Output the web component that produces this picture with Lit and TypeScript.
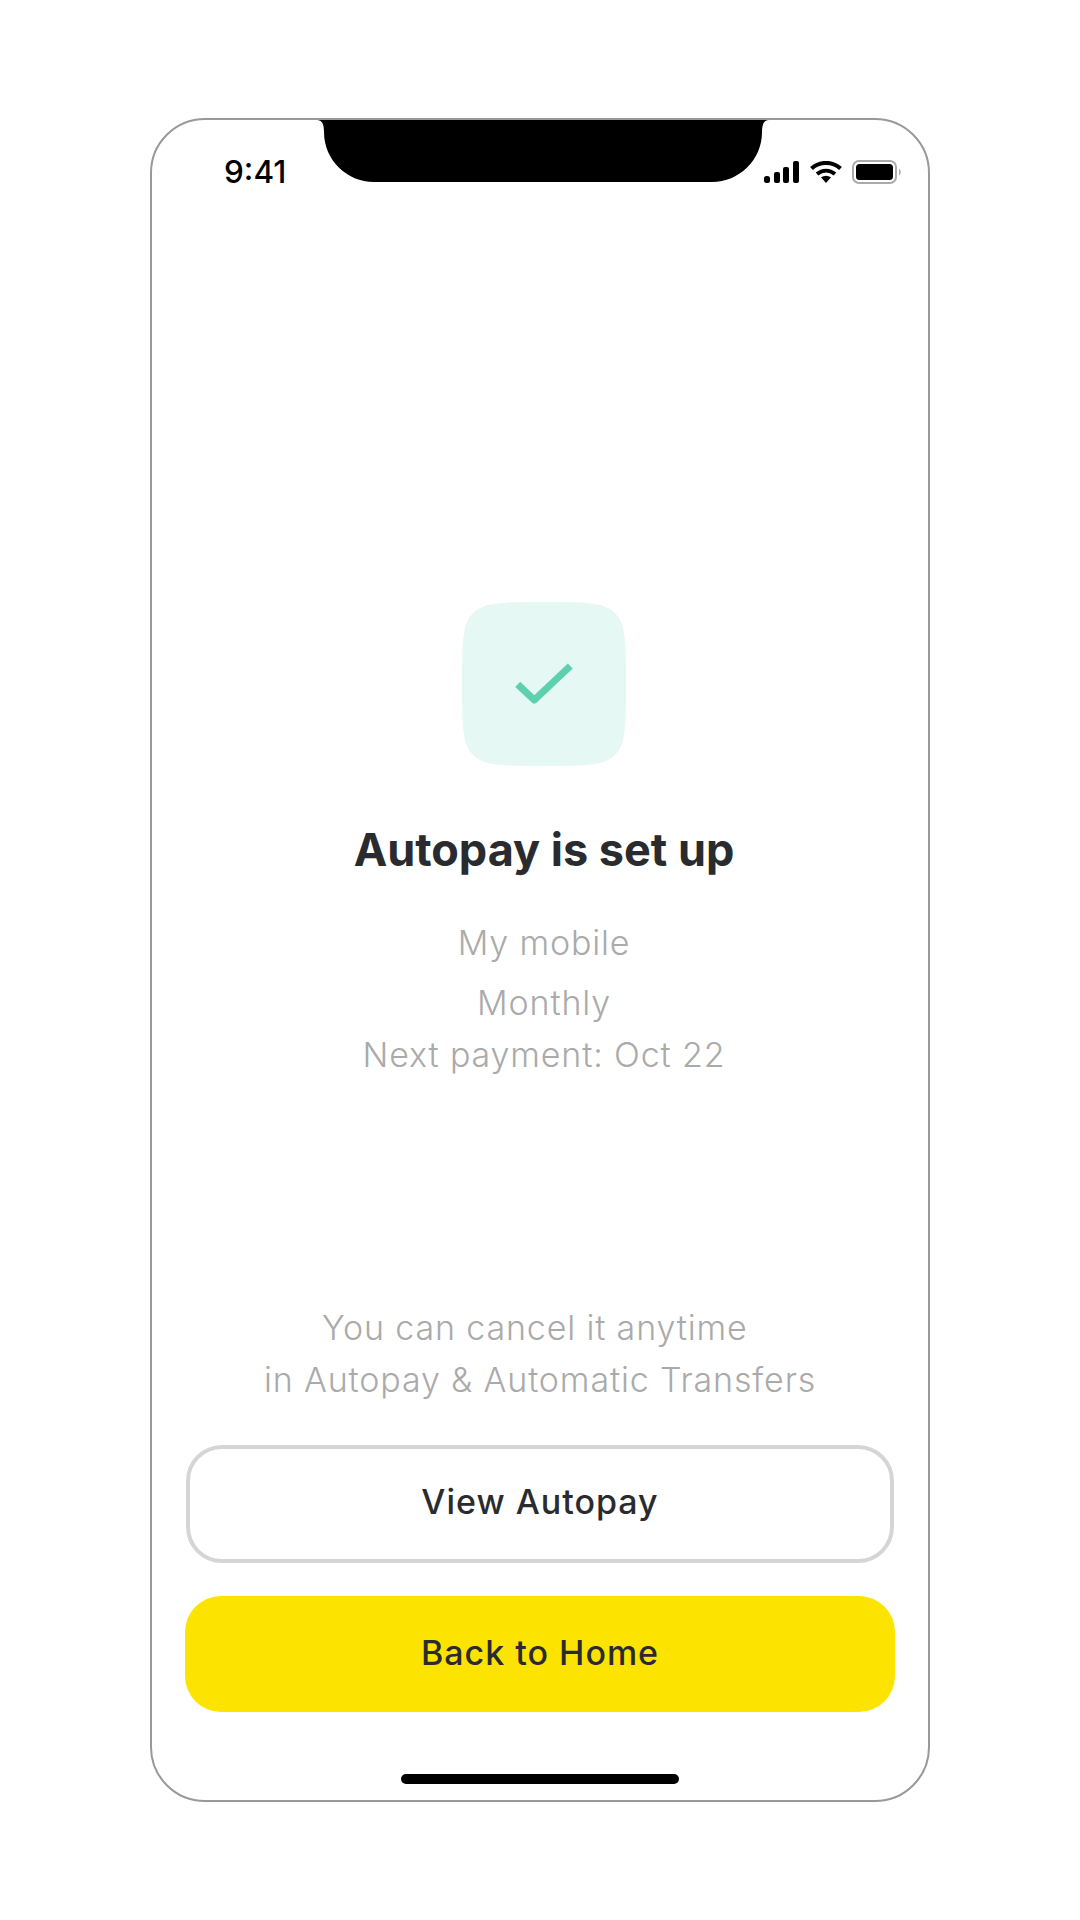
import { LitElement, html, css } from "lit";
import { customElement } from "lit/decorators.js";

@customElement("app-root")
export class AppRoot extends LitElement {
  static styles = css`
    :host {
      display: block;
      width: 1080px;
      height: 1920px;
      background: #fff;
      padding: 118px 150px;
      box-sizing: border-box;
      font-family: Inter, "Liberation Sans", sans-serif;
    }
    .phone {
      position: relative;
      width: 780px;
      height: 1684px;
      box-sizing: border-box;
      border: 2px solid #999;
      border-radius: 55px;
      display: flex;
      flex-direction: column;
      align-items: center;
      background: #fff;
    }
    .notch {
      position: absolute;
      top: 0;
      left: 165px;
      display: block;
    }
    .status {
      align-self: stretch;
      height: 71px;
      box-sizing: border-box;
      padding: 34px 26px 0 72px;
      display: flex;
      justify-content: space-between;
      align-items: flex-start;
    }
    .time {
      font-size: 31.5px;
      line-height: 36px;
      font-weight: 500;
      color: #000;
    }
    .status-icons {
      display: flex;
      gap: 10.5px;
      align-items: center;
      padding-top: 6px;
    }
    .status-icons svg {
      display: block;
    }
    .hero {
      display: flex;
      flex-direction: column;
      align-items: center;
      padding: 411px 0 0 8px;
    }
    .badge {
      display: block;
    }
    h1 {
      margin: 60px 0 0;
      font-size: 45px;
      line-height: 48px;
      font-weight: 700;
      color: #2a2b2e;
    }
    .muted {
      margin: 0;
      font-size: 34px;
      line-height: 52px;
      font-weight: 350;
      color: #aaa;
      text-align: center;
      letter-spacing: 0.85px;
    }
    .account {
      margin-top: 43px;
    }
    .schedule {
      margin-top: 8px;
    }
    .spacer {
      flex: 1;
    }
    .btn {
      box-sizing: border-box;
      display: flex;
      align-items: center;
      justify-content: center;
      font-size: 34px;
      font-weight: 500;
      letter-spacing: 1px;
      color: #2a2b2e;
      padding-bottom: 3px;
    }
    .outline {
      margin-top: 39px;
      width: 708px;
      height: 118px;
      border: 4px solid #d5d5d5;
      border-radius: 36px;
      padding-bottom: 5px;
    }
    .solid {
      margin-top: 33px;
      width: 710px;
      height: 116px;
      background: #fde400;
      border-radius: 36px;
    }
    .home {
      margin: 62px 0 16px;
      width: 278px;
      height: 10px;
      background: #000;
      border-radius: 5px;
    }
  `;

  render() {
    return html`
      <div class="phone">
        <svg class="notch" width="452" height="62" viewBox="0 0 452 62">
          <path d="M0 0H452C447 0 445 4 445 12C445 40 422 62 395 62H57C30 62 7 40 7 12C7 4 5 0 0 0Z" fill="#000" />
        </svg>
        <div class="status">
          <span class="time">9:41</span>
          <div class="status-icons">
            <svg width="35" height="22" viewBox="0 0 35 22" fill="#000">
              <rect x="0" y="15" width="6" height="7" rx="2.5" />
              <rect x="10" y="11" width="6" height="11" rx="2" />
              <rect x="19" y="6" width="6" height="16" rx="2" />
              <rect x="29" y="0" width="6" height="22" rx="2" />
            </svg>
            <svg width="32" height="22" viewBox="0 0 32 22" fill="none" stroke="#000" stroke-width="4">
              <path d="M1.5 7.5C9.5 0 22.5 0 30.5 7.5" />
              <path d="M7 13C12.5 8.5 19.5 8.5 25 13" />
              <path d="M11 16.3Q16 13 21 16.3L16 22Z" fill="#000" stroke="none" />
            </svg>
            <svg width="50" height="24" viewBox="0 0 50 24">
              <rect x="1" y="1" width="43" height="22" rx="6" fill="#fff" stroke="#aaa" stroke-width="2" />
              <rect x="4" y="4" width="37" height="16" rx="3.5" fill="#000" />
              <path d="M47 8.5C49 9.5 49.5 14.5 47 15.5Z" fill="#aaa" />
            </svg>
          </div>
        </div>

        <div class="hero">
          <svg class="badge" width="164" height="164" viewBox="0 0 164 164">
            <path
              d="M82 0C122 0 142 0 153 11C164 22 164 42 164 82C164 122 164 142 153 153C142 164 122 164 82 164C42 164 22 164 11 153C0 142 0 122 0 82C0 42 0 22 11 11C22 0 42 0 82 0Z"
              fill="#e6f8f3"
            />
            <path d="M55.7 82.3L72.3 98L108.3 64" fill="none" stroke="#5fd0ae" stroke-width="7.2" stroke-linejoin="round" />
          </svg>
          <h1>Autopay is set up</h1>
          <p class="muted account">My mobile</p>
          <p class="muted schedule">Monthly<br />Next payment: Oct 22</p>
        </div>

        <div class="spacer"></div>

        <p class="muted">You can cancel it anytime&nbsp;<br />in Autopay &amp; Automatic Transfers</p>
        <div class="btn outline">View Autopay</div>
        <div class="btn solid">Back to Home</div>
        <div class="home"></div>
      </div>
    `;
  }
}
